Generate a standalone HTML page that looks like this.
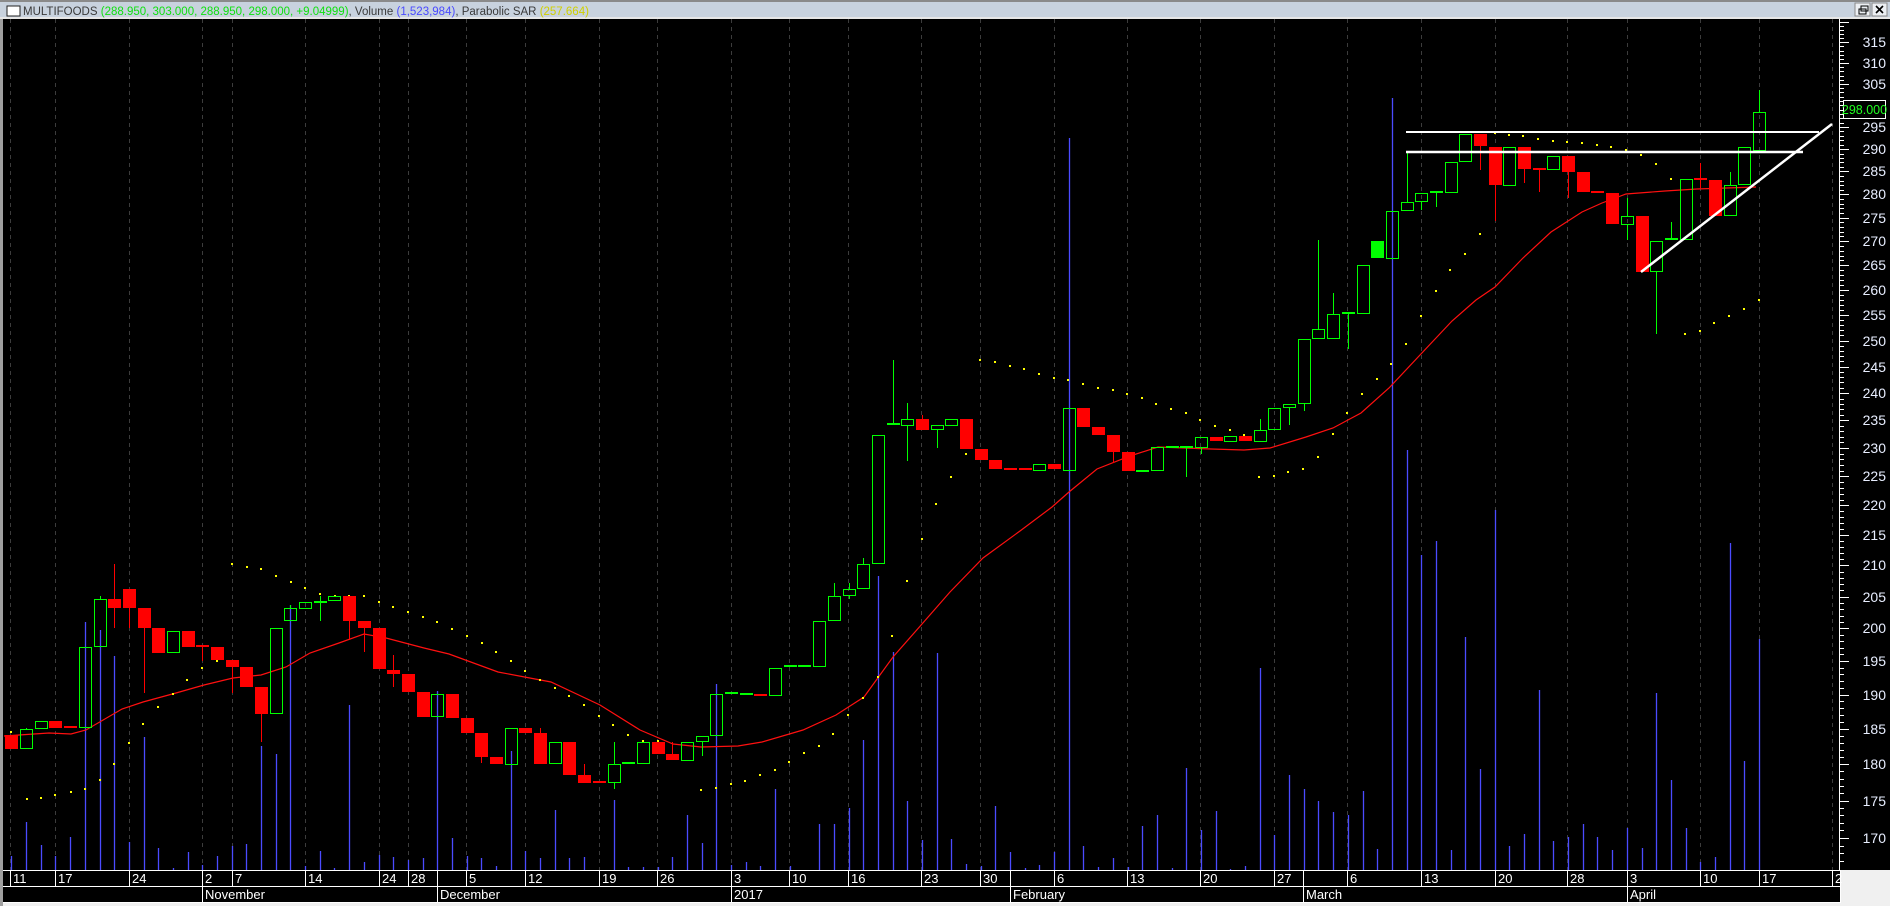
<!DOCTYPE html>
<html><head><meta charset="utf-8">
<style>
html,body{margin:0;padding:0;background:#f0f0f0;width:1890px;height:906px;overflow:hidden}
svg{display:block}
text{font-family:"Liberation Sans",Arial,sans-serif}
</style></head>
<body>
<svg id="c" xmlns="http://www.w3.org/2000/svg" width="1890" height="906" viewBox="0 0 1890 906">
<rect x="0" y="0" width="1890" height="906" fill="#f0f0f0"/>
<rect x="0" y="0" width="1890" height="19" fill="#c8d2de"/>
<rect x="0" y="0" width="1890" height="2" fill="#8a8a8a"/>
<rect x="0" y="17" width="1890" height="2" fill="#e6e6e6"/>
<rect x="7" y="6" width="13" height="10" fill="#fff" stroke="#222" stroke-width="1"/>
<text x="23" y="15" font-size="11.5" fill="#3a3a3a">MULTIFOODS <tspan fill="#10e010">(288.950, 303.000, 288.950, 298.000, +9.04999)</tspan>, Volume <tspan fill="#4a4aff">(1,523,984)</tspan>, Parabolic SAR <tspan fill="#d0d000">(257.664)</tspan></text>
<rect x="1855" y="3" width="15" height="13" fill="#eceff3" stroke="#8a8a8a"/>
<rect x="1859" y="9" width="7" height="5" fill="none" stroke="#000"/>
<rect x="1861" y="6" width="7" height="5" fill="none" stroke="#000"/>
<rect x="1872" y="3" width="15" height="13" fill="#eceff3" stroke="#8a8a8a"/>
<path d="M1876 6 L1883 13 M1883 6 L1876 13" stroke="#000" stroke-width="1.6"/>
<rect x="0" y="19" width="3" height="887" fill="#a0a0a0"/>
<rect x="3" y="19" width="1887" height="851" fill="#000"/>
<rect x="3" y="870" width="1837" height="32" fill="#000"/>
<g id="dyn"></g>
</svg>
<script>
(function(){
var s='';
function X(i){return 11.4+14.686*i;}
var grid=[10,55,129,202,232,305,379,408,466,525,599,657,731,789,848,921,980,1054,1127,1200,1274,1347,1421,1495,1567,1627,1700,1759,1832];
grid.forEach(function(x){s+='<line x1="'+(x+0.5)+'" y1="19" x2="'+(x+0.5)+'" y2="870" stroke="#3c3c3c" stroke-dasharray="4,4"/>';});
var vol=[856,822,845,856,837,622,630,656,842,737,848,868,852,865,856,846,844,746,754,605,866,851,868,705,862,855,857,860,858,691,838,856,858,866,751,851,858,810,858,857,870,800,867,867,867,857,815,843,684,865,862,866,789,866,870,824,824,808,740,576,652,801,840,653,839,864,866,806,852,868,865,852,138,846,867,858,867,826,815,868,768,830,811,869,866,668,835,775,789,801,812,815,791,849,98,450,555,541,850,637,769,510,846,834,690,841,837,824,837,850,828,848,693,780,828,862,857,543,761,639];
vol.forEach(function(v,i){var x=Math.round(X(i))+0.5;if(v<870)s+='<line x1="'+x+'" y1="'+v+'" x2="'+x+'" y2="870" stroke="#4b4bff" stroke-width="1.3"/>';});
var ma=[[4,736],[49,733],[71,734],[86,730],[122,709],[143,702],[176,693],[204,685],[233,678],[261,675],[286,667],[310,653],[339,643],[364,634],[386,638],[424,648],[449,654],[498,672],[551,682],[600,705],[640,730],[673,744],[701,747],[738,746],[762,742],[803,730],[836,715],[864,697],[893,657],[922,624],[950,592],[983,558],[1020,531],[1052,507],[1069,492],[1097,469],[1130,456],[1158,447],[1211,449],[1244,450],[1270,448],[1306,437],[1333,428],[1361,413],[1389,388],[1420,355],[1452,321],[1476,300],[1495,287],[1523,258],[1551,232],[1582,212],[1602,203],[1626,194],[1665,191],[1697,189],[1756,187]];
s+='<polyline fill="none" stroke="#ff1010" stroke-width="1.2" points="'+ma.map(function(p){return p.join(',');}).join(' ')+'"/>';
var sar=[[11,732],[27,799],[41,798],[55,795],[71,792],[85,789],[100,780],[114,764],[129,743],[143,724],[158,707],[173,694],[187,680],[202,668],[217,661],[232,564],[247,567],[261,569],[276,576],[291,582],[305,588],[320,594],[335,596],[349,596],[364,596],[379,602],[393,607],[408,612],[423,617],[437,622],[452,629],[467,636],[482,643],[496,652],[511,661],[525,671],[540,680],[555,688],[569,696],[584,705],[599,716],[613,725],[628,735],[643,741],[658,741],[701,790],[716,788],[731,784],[745,781],[760,775],[775,770],[789,762],[804,753],[819,746],[833,734],[848,715],[863,698],[878,677],[892,636],[907,581],[922,539],[936,504],[951,477],[966,454],[980,360],[995,362],[1010,366],[1024,369],[1039,374],[1054,378],[1068,380],[1083,384],[1098,388],[1113,390],[1127,394],[1142,398],[1156,404],[1171,409],[1186,413],[1200,420],[1215,426],[1230,430],[1244,435],[1259,477],[1274,476],[1288,472],[1303,469],[1318,457],[1333,434],[1347,413],[1362,394],[1377,379],[1391,364],[1406,344],[1421,316],[1436,291],[1450,270],[1465,254],[1480,234],[1495,133],[1509,135],[1523,136],[1538,139],[1553,141],[1567,142],[1582,143],[1597,145],[1611,147],[1626,150],[1641,155],[1656,164],[1671,179],[1685,334],[1700,331],[1714,323],[1729,316],[1744,309],[1759,300]];
sar.forEach(function(p){s+='<rect x="'+(p[0]-1)+'" y="'+(p[1]-1)+'" width="2" height="2" fill="#ffff00"/>';});
var cd=[[0,'r',735,749],[1,'g',729,749,728,749],[2,'g',721,729],[3,'r',721,728],[4,'r',727,727],[5,'g',647,728],[6,'g',599,647,596],[7,'r',599,608,564,628],[8,'r',589,608,589,628],[9,'r',608,628,608,693],[10,'r',628,653],[11,'g',631,653],[12,'r',631,647],[13,'r',646,646,646,661],[14,'r',647,660],[15,'r',660,667,660,693],[16,'r',667,687],[17,'r',687,714,687,742],[18,'g',628,714],[19,'g',608,621,605],[20,'g',602,609],[21,'g',602,602,596,621],[22,'g',596,601],[23,'r',596,621,596,640],[24,'r',621,628,621,652],[25,'r',628,669],[26,'r',670,674,655,687],[27,'r',674,692],[28,'r',692,717],[29,'g',694,717],[30,'r',694,718],[31,'r',718,733],[32,'r',733,757,733,763],[33,'r',757,764],[34,'g',728,765],[35,'r',728,733],[36,'r',733,764,728],[37,'g',742,764],[38,'r',742,775],[39,'r',775,783,764],[40,'r',782,782],[41,'g',764,783,742,789],[42,'g',763,763],[43,'g',742,764],[44,'r',742,754],[45,'r',754,760,742],[46,'g',742,761],[47,'g',736,742,736,756],[48,'g',694,736],[49,'g',693,693],[50,'g',694,694],[51,'r',695,695],[52,'g',668,696],[53,'g',666,666],[54,'g',666,666],[55,'g',621,667],[56,'g',596,621,583],[57,'g',589,596,583,599],[58,'g',564,589,558],[59,'g',435,564],[60,'g',424,424,360],[61,'g',419,426,403,461],[62,'r',419,430,415],[63,'g',425,430,425,448],[64,'g',419,426],[65,'r',419,449],[66,'r',449,460],[67,'r',460,469],[68,'r',469,469],[69,'r',469,469],[70,'g',464,471],[71,'r',464,469],[72,'g',408,471],[73,'r',408,427],[74,'r',427,435],[75,'r',435,452,435,463],[76,'r',452,471],[77,'g',471,471],[78,'g',447,471],[79,'g',447,447],[80,'g',447,447,447,477],[81,'g',437,448,437,454],[82,'r',437,441],[83,'g',436,442],[84,'r',436,441],[85,'g',430,442,419],[86,'g',408,430],[87,'g',404,408,404,425],[88,'g',339,404,339,411],[89,'g',329,339,240],[90,'g',314,339,293],[91,'g',313,313,313,349],[92,'g',265,314],[93,'G',241,258],[94,'g',211,259],[95,'g',202,211,152],[96,'g',193,202,193,210],[97,'g',192,192,192,207],[98,'g',162,193],[99,'g',134,162],[100,'r',134,146,134,170],[101,'r',147,185,147,221],[102,'g',147,186],[103,'r',147,169,147,183],[104,'r',169,169,169,192],[105,'g',156,170],[106,'r',156,172,156,198],[107,'r',172,192],[108,'r',192,192],[109,'r',193,224],[110,'g',216,225,198,240],[111,'r',216,272],[112,'g',241,272,241,334],[113,'g',239,239,222,239],[114,'g',179,240],[115,'r',179,179,163,188],[116,'r',180,216],[117,'g',185,216,172],[118,'g',147,185],[119,'g',112,151,90]];
cd.forEach(function(c){
 var x=Math.round(X(c[0]));var t=c[2],b=c[3],h=c.length>4?c[4]:t,l=c.length>5?c[5]:b;
 var col=(c[1]=='r')?'#ff0000':'#00ff00';
 if(h<t)s+='<line x1="'+(x+0.5)+'" y1="'+h+'" x2="'+(x+0.5)+'" y2="'+t+'" stroke="'+col+'"/>';
 if(l>b)s+='<line x1="'+(x+0.5)+'" y1="'+b+'" x2="'+(x+0.5)+'" y2="'+l+'" stroke="'+col+'"/>';
 if(b-t<2){s+='<rect x="'+(x-6)+'" y="'+(t-1)+'" width="13" height="2" fill="'+col+'"/>';}
 else if(c[1]=='g'){s+='<rect x="'+(x-5.5)+'" y="'+(t+0.5)+'" width="12" height="'+(b-t-1)+'" fill="none" stroke="'+col+'"/>';}
 else{s+='<rect x="'+(x-6)+'" y="'+t+'" width="13" height="'+(b-t)+'" fill="'+col+'"/>';}
});
s+='<line x1="1406" y1="132" x2="1819" y2="132" stroke="#fff" stroke-width="2"/>';
s+='<line x1="1406" y1="152" x2="1803" y2="152" stroke="#fff" stroke-width="2.5"/>';
s+='<line x1="1641" y1="272" x2="1832" y2="124" stroke="#fff" stroke-width="2.5"/>';
s+='<line x1="1839.5" y1="19" x2="1839.5" y2="870" stroke="#fff"/>';
for(var p=166;p<=320;p++){var y=84+1290*Math.log(305/p);if(y<22||y>868)continue;var yy=Math.round(y)+0.5;
 var maj=(p%5==0);s+='<line x1="1840" y1="'+yy+'" x2="'+(maj?1849:1844)+'" y2="'+yy+'" stroke="#fff"/>';
 if(maj&&p!=300&&y>32)s+='<text x="1886" y="'+(Math.round(y)+5)+'" font-size="14" fill="#e8eeff" text-anchor="end">'+p+'</text>';}
s+='<rect x="1843.5" y="100.5" width="42" height="18" fill="#000" stroke="#fff"/>';
s+='<text x="1864.5" y="114" font-size="12.5" fill="#20ff20" text-anchor="middle">298.000</text>';
s+='<line x1="3" y1="870.5" x2="1840" y2="870.5" stroke="#fff"/>';
s+='<line x1="3" y1="886.5" x2="1840" y2="886.5" stroke="#fff"/>';
s+='<line x1="3" y1="902.5" x2="1840" y2="902.5" stroke="#fff"/>';
s+='<line x1="1840.5" y1="870" x2="1840.5" y2="903" stroke="#fff"/>';
var dates=[[10,'11'],[55,'17'],[129,'24'],[202,'2'],[232,'7'],[305,'14'],[379,'24'],[408,'28'],[437,''],[466,'5'],[525,'12'],[599,'19'],[657,'26'],[731,'3'],[789,'10'],[848,'16'],[921,'23'],[980,'30'],[1010,''],[1054,'6'],[1127,'13'],[1200,'20'],[1274,'27'],[1303,''],[1347,'6'],[1421,'13'],[1495,'20'],[1567,'28'],[1627,'3'],[1700,'10'],[1759,'17'],[1832,'2']];
dates.forEach(function(d){s+='<line x1="'+(d[0]+0.5)+'" y1="870" x2="'+(d[0]+0.5)+'" y2="886" stroke="#fff"/>';
 if(d[1])s+='<text x="'+(d[0]+3)+'" y="883" font-size="13" fill="#fff">'+d[1]+'</text>';});
var months=[[202,'November'],[437,'December'],[731,'2017'],[1010,'February'],[1303,'March'],[1627,'April']];
months.forEach(function(m){s+='<line x1="'+(m[0]+0.5)+'" y1="870" x2="'+(m[0]+0.5)+'" y2="902" stroke="#fff"/>';
 s+='<text x="'+(m[0]+3)+'" y="899" font-size="13" fill="#fff">'+m[1]+'</text>';});
document.getElementById('dyn').innerHTML=s;
})();
</script>
</body></html>
